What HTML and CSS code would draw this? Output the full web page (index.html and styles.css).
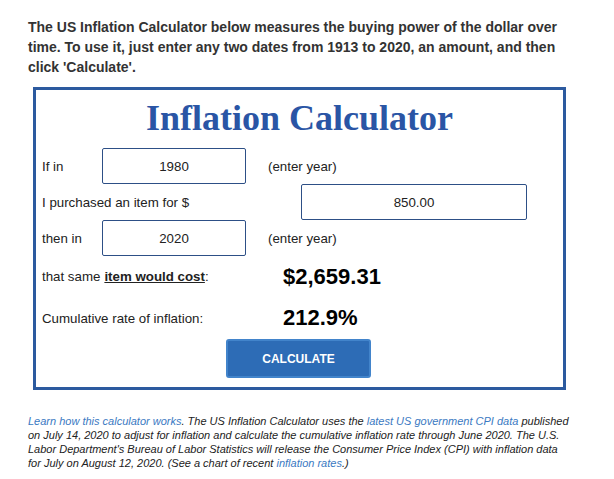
FILE: index.html
```html
<!DOCTYPE html>
<html>
<head>
    <title>US Inflation Calculator</title>
    <link rel="stylesheet" href="styles.css">
</head>
<body>
<div class="page">
    <p class="intro">The US Inflation Calculator below measures the buying power of the dollar over time. To use it, just enter any two dates from 1913 to 2020, an amount, and then click 'Calculate'.</p>

    <form class="calc" name="calc">
        <h1 class="calc-title">Inflation Calculator</h1>
        <div class="calc-grid">
            <div class="cell label">If in</div>
            <div class="cell"><input class="field year" type="text" name="year1" value="1980"></div>
            <div class="cell note">(enter year)</div>

            <div class="cell label wide">I purchased an item for $</div>
            <div class="cell"><input class="field amount" type="text" name="amount" value="850.00"></div>

            <div class="cell label">then in</div>
            <div class="cell"><input class="field year" type="text" name="year2" value="2020"></div>
            <div class="cell note">(enter year)</div>

            <div class="cell label wide">that same <a class="cost-link">item would cost</a>:</div>
            <div class="cell value">$2,659.31</div>

            <div class="cell label wide">Cumulative rate of inflation:</div>
            <div class="cell value">212.9%</div>
        </div>
        <div class="btn-row">
            <button type="button" class="calc-button">CALCULATE</button>
        </div>
    </form>

    <p class="footnote"><a class="link">Learn how this calculator works</a>. The US Inflation Calculator uses the <a class="link">latest US government CPI data</a> published on July 14, 2020 to adjust for inflation and calculate the cumulative inflation rate through June 2020. The U.S. Labor Department's Bureau of Labor Statistics will release the Consumer Price Index (CPI) with inflation data for July on August 12, 2020. (See a chart of recent <a class="link">inflation rates</a>.)</p>
</div>
</body>
</html>
```

FILE: styles.css
```css
body {
    margin: 0;
    background-color: #fff;
    color: #222;
    font-family: "Liberation Sans", Arial, sans-serif;
}

.page {
    width: 543px;
    padding: 17px 28px 0 28px;
}

.intro {
    margin: 0;
    font-size: 14px;
    font-weight: bold;
    line-height: 20px;
    color: #333;
}

.calc {
    width: 527px;
    margin: 10px 0 0 5px;
    padding: 8px 0 9px 0;
    border: 3px solid #2c5a9f;
}

.calc-title {
    margin: 0 0 10px 0;
    text-align: center;
    font-family: "Liberation Serif", "Times New Roman", serif;
    font-size: 36px;
    line-height: 40px;
    color: #2a55a5;
}

.calc-grid {
    display: grid;
    grid-template-columns: 66px 144px 1fr;
    grid-template-rows: 36px 36px 36px 41px 42px;
    font-size: 13.3px;
}

.cell {
    display: flex;
    align-items: center;
}

.label {
    padding-left: 6px;
}

.wide {
    grid-column: 1 / span 2;
}

.note {
    padding-left: 22px;
}

.field {
    box-sizing: border-box;
    height: 36px;
    border: 1px solid #2d4f86;
    border-radius: 2px;
    font-family: "Liberation Sans", Arial, sans-serif;
    font-size: 13.3px;
    color: #222;
    text-align: center;
    padding: 0;
}

.year {
    width: 144px;
}

.amount {
    width: 226px;
    margin-left: 55px;
}

.value {
    padding-left: 37px;
    font-size: 22px;
    font-weight: bold;
    color: #000;
}

.cost-link {
    font-weight: bold;
    text-decoration: underline;
    color: #222;
    margin-left: 4px;
}

.btn-row {
    display: flex;
    justify-content: center;
}

.calc-button {
    width: 145px;
    height: 39px;
    border: 2px solid #4284cb;
    border-radius: 3px;
    background-color: #2d6cb6;
    color: #fff;
    font-family: "Liberation Sans", Arial, sans-serif;
    font-size: 12px;
    font-weight: bold;
    margin-right: 2px;
}

.footnote {
    margin: 24px 0 0 0;
    font-size: 11px;
    font-style: italic;
    line-height: 14px;
    color: #222;
}

.link {
    color: #3a79c2;
}
```
